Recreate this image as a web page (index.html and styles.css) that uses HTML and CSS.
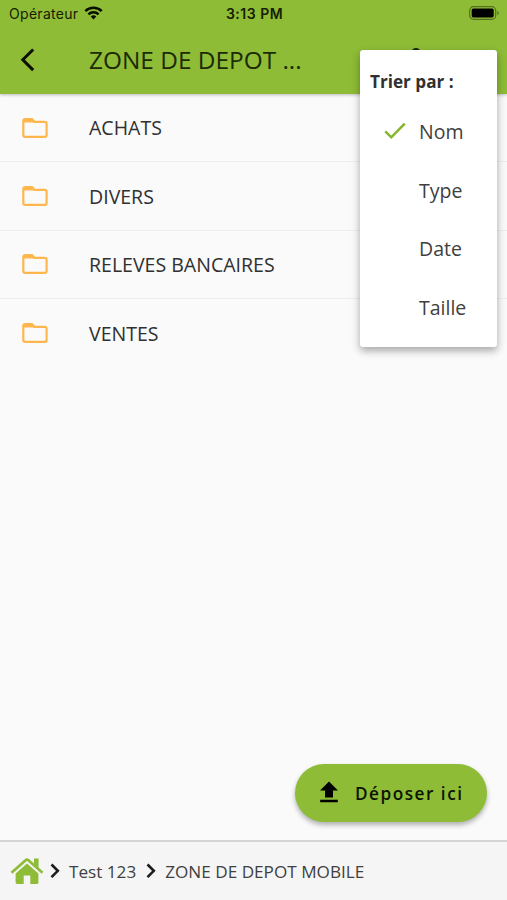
FILE: index.html
```html
<!DOCTYPE html>
<html lang="fr">
<head>
<meta charset="utf-8">
<title>Zone de dépôt</title>
<link rel="stylesheet" href="styles.css">
</head>
<body>
<div class="app">
  <header class="header">
    <div class="status">
      <div class="carrier"><span>Opérateur</span>
        <svg class="wifi" viewBox="0 0 18 14"><g fill="none" stroke="currentColor" stroke-width="2.5"><path d="M.8 5.200a11.6 11.6 0 0 1 16.4 0"/><path d="M3.900 8.400a7.200 7.200 0 0 1 10.200 0"/></g><path d="M9 13.400 6.200 10.500a4 4 0 0 1 5.600 0z" fill="currentColor"/></svg>
      </div>
      <div class="clock">3:13 PM</div>
      <svg class="battery" viewBox="0 0 31 14"><rect x=".7" y=".7" width="26" height="12.600" rx="3.800" fill="none" stroke="#55701f" stroke-width="1.200"/><rect x="2.700" y="2.600" width="22" height="8.800" rx="1.600" fill="#000"/><path d="M28.400 4.800q3 2.200 0 4.400z" fill="#55701f"/></svg>
    </div>
    <div class="toolbar">
      <svg class="back" viewBox="0 0 16 24"><path d="M13.200 1.500 2.800 11.800l10.400 10.300" fill="none" stroke="#0b1000" stroke-width="3"/></svg>
      <h1 class="title">ZONE DE DEPOT ...</h1>
      <svg class="more" viewBox="0 0 8 24"><circle cx="4" cy="4" r="4"/><circle cx="4" cy="12" r="3"/><circle cx="4" cy="20" r="3"/></svg>
    </div>
  </header>
  <main class="content">
    <ul class="list">
      <li class="row"><svg class="folder" viewBox="0 0 26 20"><path d="M1.300 3.200q0-2 2-2H10l2.400 2.600h10.200q2 0 2 2V17q0 1.800-2 1.800H3.300q-2 0-2-1.800z" fill="none" stroke="currentColor" stroke-width="2.200"/><path d="M1.300 1.200H10l3 3.400H1.300z" fill="currentColor"/></svg><span>ACHATS</span></li>
      <li class="row"><svg class="folder" viewBox="0 0 26 20"><path d="M1.300 3.200q0-2 2-2H10l2.400 2.600h10.200q2 0 2 2V17q0 1.800-2 1.800H3.300q-2 0-2-1.800z" fill="none" stroke="currentColor" stroke-width="2.200"/><path d="M1.300 1.200H10l3 3.400H1.300z" fill="currentColor"/></svg><span>DIVERS</span></li>
      <li class="row"><svg class="folder" viewBox="0 0 26 20"><path d="M1.300 3.200q0-2 2-2H10l2.400 2.600h10.200q2 0 2 2V17q0 1.800-2 1.800H3.300q-2 0-2-1.800z" fill="none" stroke="currentColor" stroke-width="2.200"/><path d="M1.300 1.200H10l3 3.400H1.300z" fill="currentColor"/></svg><span>RELEVES BANCAIRES</span></li>
      <li class="row"><svg class="folder" viewBox="0 0 26 20"><path d="M1.300 3.200q0-2 2-2H10l2.400 2.600h10.200q2 0 2 2V17q0 1.800-2 1.800H3.300q-2 0-2-1.800z" fill="none" stroke="currentColor" stroke-width="2.200"/><path d="M1.300 1.200H10l3 3.400H1.300z" fill="currentColor"/></svg><span>VENTES</span></li>
    </ul>
    <button class="upload"><svg class="upload-icon" viewBox="0 0 18 22"><path d="M9 .5 18 9.500h-5V16.500H5V9.500H0zM.2 18.700h17.600v2.500H.2z"/></svg><span>Déposer ici</span></button>
  </main>
  <footer class="breadcrumb">
    <svg class="home" viewBox="0 0 34 28"><path d="M1.500 15.700 15.600 3.200q1.400-1.200 2.800 0l14.100 12.500" fill="none" stroke="currentColor" stroke-width="2.700"/><path d="M24 1.500h4.600v9.300L24 6.900zM17 6.600l11.400 10v9q0 1.400-1.400 1.400h-6.700v-8.400h-6.600V27H7q-1.400 0-1.400-1.400v-9z" fill="currentColor"/></svg>
    <svg class="chevron" viewBox="0 0 10 16"><path d="m1.500 1.500 6.300 6.300-6.300 6.300"/></svg>
    <span class="crumb crumb-parent">Test 123</span>
    <svg class="chevron" viewBox="0 0 10 16"><path d="m1.500 1.500 6.300 6.300-6.300 6.300"/></svg>
    <span class="crumb crumb-current">ZONE DE DEPOT MOBILE</span>
  </footer>
  <div class="menu">
    <div class="menu-title">Trier par :</div>
    <div class="option"><svg class="check" viewBox="0 0 22 18"><path d="m1.300 9.300 6 6L20.700 1.700" fill="none" stroke="currentColor" stroke-width="2.500"/></svg><span>Nom</span></div>
    <div class="option"><span>Type</span></div>
    <div class="option"><span>Date</span></div>
    <div class="option"><span>Taille</span></div>
  </div>
</div>
</body>
</html>
```
FILE: styles.css
```css
* { box-sizing: border-box; }
body { margin: 0; font-family: "Open Sans", "Noto Sans", sans-serif; color: #303030; }
svg { display: block; flex: none; }
.app { position: relative; display: flex; flex-direction: column; width: 507px; height: 900px; background: #fafafa; overflow: hidden; }
.header { position: relative; z-index: 1; height: 94px; flex: none; background: #8ebc37; box-shadow: 0 1px 3px rgba(0,0,0,.25); }
.status { display: grid; grid-template-columns: 1fr auto 1fr; align-items: center; height: 27px; padding: 0 7px 0 9px; font-family: Inter, sans-serif; color: #172000; }
.carrier { display: flex; align-items: center; gap: 6px; font-size: 14px; letter-spacing: .3px; }
.wifi { width: 19px; height: 14px; margin-top: -1px; color: #071000; }
.clock { font-size: 14px; font-weight: 600; letter-spacing: .5px; }
.battery { width: 31px; height: 14px; margin-top: -1px; justify-self: end; }
.toolbar { display: flex; align-items: center; height: 66px; padding-left: 20px; }
.back { width: 16px; height: 24px; }
.title { margin: 0 0 0 53px; width: 323px; font-size: 24.4px; line-height: 34px; font-weight: 400; color: #1c2a05; white-space: nowrap; }
.more { width: 8px; height: 24px; fill: #1c2a05; }
.content { flex: 1; display: flex; flex-direction: column; justify-content: space-between; }
.list { margin: 0; padding: 0; list-style: none; }
.row { display: flex; align-items: center; gap: 41px; height: 68.4px; padding-left: 22px; border-bottom: 1px solid #eeeeee; font-size: 19.55px; }
.row:last-child { border-bottom: 0; }
.folder { width: 26px; height: 20px; color: #ffb74d; }
.upload { display: flex; align-items: center; align-self: flex-end; gap: 17px; width: 192px; height: 58px; margin: 0 20px 18px 0; padding: 0 0 0 25px; border: 0; border-radius: 29px; background: #8ebc37; box-shadow: 0 3px 5px rgba(0,0,0,.3); font: 600 17.2px "Open Sans", sans-serif; letter-spacing: 1.5px; color: #0c1400; white-space: nowrap; }
.upload-icon { width: 18px; height: 22px; margin-top: -2px; }
.breadcrumb { display: flex; align-items: center; height: 60px; flex: none; padding-left: 10px; background: #f5f5f5; border-top: 2px solid #d5d5d5; font-size: 17.15px; color: #404040; white-space: nowrap; }
.home { width: 34px; height: 28px; margin-right: 6px; color: #8ebc37; }
.chevron { width: 10px; height: 16px; fill: none; stroke: #1c1c1c; stroke-width: 2.6; }
.crumb-parent { margin: 0 10px 0 9px; }
.crumb-current { margin-left: 9px; }
.menu { position: absolute; z-index: 2; left: 360px; top: 50px; width: 137px; height: 297px; padding-top: 12px; background: #fff; border-radius: 3px; box-shadow: 0 4px 7px rgba(0,0,0,.25), 0 3px 12px rgba(0,0,0,.1); }
.menu-title { height: 40.2px; padding-left: 10px; font-size: 17.15px; line-height: 40px; font-weight: 700; white-space: nowrap; }
.option { display: flex; align-items: center; justify-content: flex-start; height: 58.6px; padding-left: 24px; font-size: 19.5px; color: #404040; }
.option span { margin-left: 35px; }
.check { width: 22px; height: 18px; color: #84b52b; }
.check + span { margin-left: 13px; }
```
